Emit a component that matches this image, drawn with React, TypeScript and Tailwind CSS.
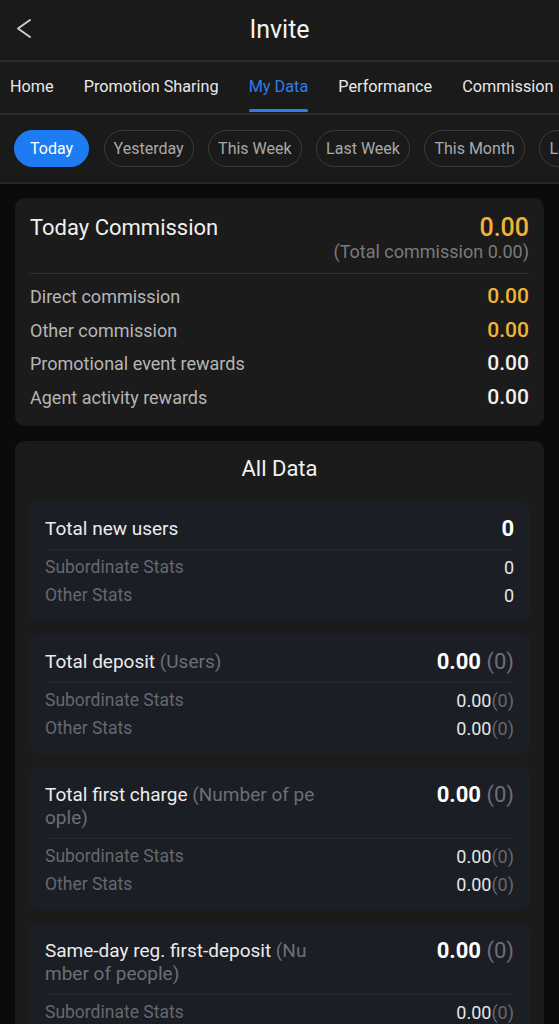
const tabs = ['Home', 'Promotion Sharing', 'My Data', 'Performance', 'Commission']
const chips = ['Today', 'Yesterday', 'This Week', 'Last Week', 'This Month', 'Last Month']

const commissionRows = [
  { label: 'Direct commission', value: '0.00', gold: true },
  { label: 'Other commission', value: '0.00', gold: true },
  { label: 'Promotional event rewards', value: '0.00', gold: false },
  { label: 'Agent activity rewards', value: '0.00', gold: false },
]

type Block = { title: string; note?: string; value: string; count?: string; sub: string }

const blocks: Block[] = [
  { title: 'Total new users', value: '0', sub: '0' },
  { title: 'Total deposit', note: '(Users)', value: '0.00', count: '(0)', sub: '0.00' },
  { title: 'Total first charge', note: '(Number of people)', value: '0.00', count: '(0)', sub: '0.00' },
  { title: 'Same-day reg. first-deposit', note: '(Number of people)', value: '0.00', count: '(0)', sub: '0.00' },
]

function DataBlock({ block }: { block: Block }) {
  return <div className="bg-[#1b1e25] rounded-[10px] px-4 pt-[16px] pb-[12px]">
    <div className="flex justify-between items-start pb-[9px] border-b border-[#262a32]">
      <p className="w-[278px] text-[19px] leading-[23px] text-[#ececec] break-all">
        {block.title}{block.note && <span className="text-[#6c6f75]"> {block.note}</span>}
      </p>
      <p className="text-[22px] leading-[23px] text-white font-bold whitespace-nowrap">
        {block.value}{block.count && <span className="font-normal text-[#6c6f75]"> {block.count}</span>}
      </p>
    </div>
    <div className="pt-[3px]">
      {['Subordinate Stats', 'Other Stats'].map(label => <div key={label} className="flex justify-between items-center h-[28px]">
        <span className="text-[17.5px] text-[#65686e]">{label}</span>
        <span className="text-[18px] text-[#e6e6e6]">{block.sub}{block.count && <span className="text-[#65686e]">{block.count}</span>}</span>
      </div>)}
    </div>
  </div>
}

export default function App() {
  return <div className="min-h-screen bg-[#0b0b0b] text-white overflow-hidden" style={{ fontFamily: 'Roboto, "Noto Sans", sans-serif' }}>
    <div className="bg-[#1a1a1a]">
      <div className="relative h-[62px] flex items-center justify-center border-b-2 border-[#2c2c2c]">
        <svg className="absolute left-[16px] top-[18px]" width="16" height="22" viewBox="0 0 16 22" fill="none">
          <path d="M14 2 L2 10.5 L14 19" stroke="#cfcfcf" strokeWidth="2" strokeLinecap="round" strokeLinejoin="round" />
        </svg>
        <h1 className="text-[25px] text-[#f2f2f2]">Invite</h1>
      </div>
      <div className="h-[53px] flex items-stretch gap-[30px] pl-[10px] whitespace-nowrap border-b-2 border-[#2c2c2c]">
        {tabs.map(t => <div key={t} className="relative flex items-center text-[16.25px]">
          <span className={t === 'My Data' ? 'text-[#2f7de6]' : 'text-[#e8e8e8]'}>{t}</span>
          {t === 'My Data' && <span className="absolute left-0 right-0 bottom-[1px] h-[3px] rounded-full bg-[#2f7de6]" />}
        </div>)}
      </div>
      <div className="h-[69px] flex items-center gap-[14.5px] pl-[14px] whitespace-nowrap border-b-2 border-[#262626]">
        {chips.map(c => <span key={c} className={c === 'Today'
          ? 'h-[37px] px-[15px] flex items-center rounded-full bg-[#1d7cf2] text-white text-[16px] border border-[#1d7cf2]'
          : 'h-[37px] px-[9px] flex items-center rounded-full border border-[#3a3a3a] text-[#a9a9a9] text-[16px]'}>{c}</span>)}
      </div>
    </div>

    <div className="px-[15px] pt-[14px] flex flex-col gap-[15px]">
      <div className="bg-[#1b1b1b] rounded-[10px] px-[15px] pt-[16px] pb-[12px]">
        <div className="flex justify-between items-start pb-[11px] border-b border-[#303030]">
          <p className="text-[22px] leading-[28px] text-[#f0f0f0]">Today Commission</p>
          <div className="text-right">
            <p className="text-[25px] leading-[28px] text-[#f3b333] font-medium">0.00</p>
            <p className="text-[18px] leading-[20px] text-[#7a7a7a]">(Total commission 0.00)</p>
          </div>
        </div>
        <div className="pt-[6px]">
          {commissionRows.map(r => <div key={r.label} className="flex justify-between items-center h-[33.5px]">
            <span className="text-[18px] text-[#b5b5b5]">{r.label}</span>
            <span className={r.gold ? 'text-[21px] font-medium text-[#f3b333]' : 'text-[21px] font-medium text-[#f0f0f0]'}>{r.value}</span>
          </div>)}
        </div>
      </div>

      <div className="bg-[#1b1b1b] rounded-[10px] px-[14px] pt-[14px] pb-[14px]">
        <p className="text-center text-[22px] leading-[28px] text-[#f0f0f0]">All Data</p>
        <div className="mt-[18px] flex flex-col gap-[13px]">
          {blocks.map(b => <DataBlock key={b.title} block={b} />)}
        </div>
      </div>
    </div>
  </div>
}
